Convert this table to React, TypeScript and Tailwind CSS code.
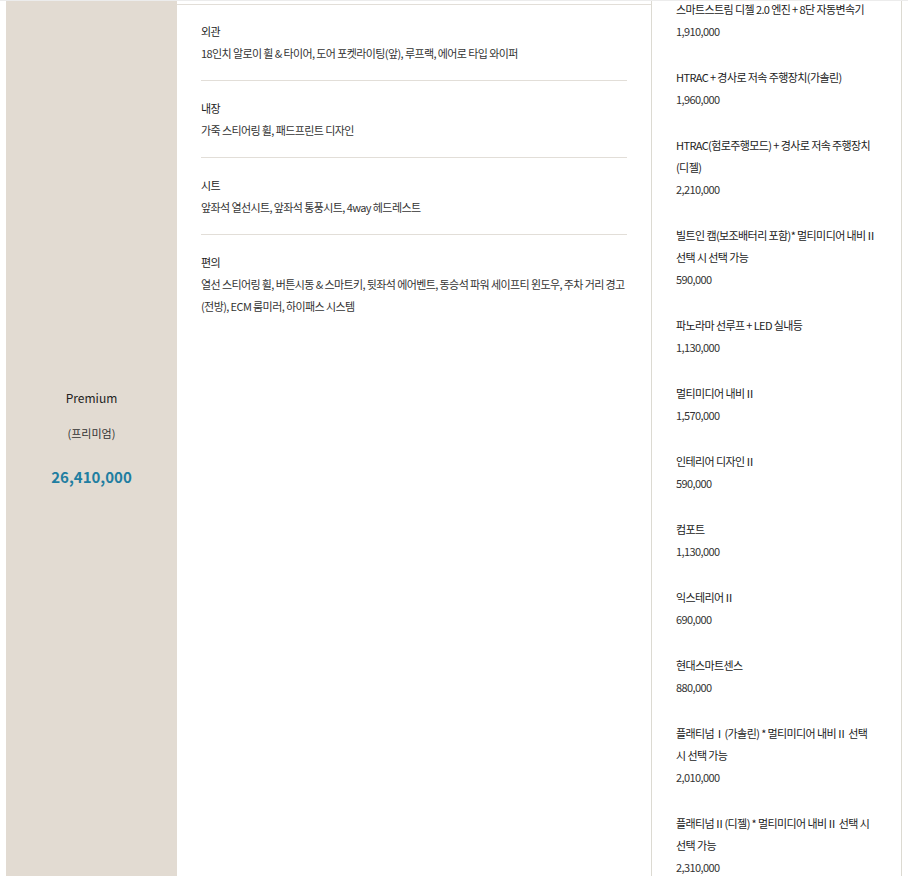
const specs = [
  { title: '외관', desc: '18인치 알로이 휠 & 타이어, 도어 포켓라이팅(앞), 루프랙, 에어로 타입 와이퍼' },
  { title: '내장', desc: '가죽 스티어링 휠, 패드프린트 디자인' },
  { title: '시트', desc: '앞좌석 열선시트, 앞좌석 통풍시트, 4way 헤드레스트' },
  { title: '편의', desc: '열선 스티어링 휠, 버튼시동 & 스마트키, 뒷좌석 에어벤트, 동승석 파워 세이프티 윈도우, 주차 거리 경고 (전방), ECM 룸미러, 하이패스 시스템' },
];

const options = [
  { name: '스마트스트림 디젤 2.0 엔진 + 8단 자동변속기', price: '1,910,000' },
  { name: 'HTRAC + 경사로 저속 주행장치(가솔린)', price: '1,960,000' },
  { name: 'HTRAC(험로주행모드) + 경사로 저속 주행장치 (디젤)', price: '2,210,000' },
  { name: '빌트인 캠(보조배터리 포함)* 멀티미디어 내비Ⅱ 선택 시 선택 가능', price: '590,000' },
  { name: '파노라마 선루프 + LED 실내등', price: '1,130,000' },
  { name: '멀티미디어 내비Ⅱ', price: '1,570,000' },
  { name: '인테리어 디자인Ⅱ', price: '590,000' },
  { name: '컴포트', price: '1,130,000' },
  { name: '익스테리어Ⅱ', price: '690,000' },
  { name: '현대스마트센스', price: '880,000' },
  { name: '플래티넘Ⅰ(가솔린) * 멀티미디어 내비Ⅱ 선택 시 선택 가능', price: '2,010,000' },
  { name: '플래티넘Ⅱ(디젤) * 멀티미디어 내비Ⅱ 선택 시 선택 가능', price: '2,310,000' },
];

export default function App() {
  return (
    <div
      className="h-[876px] w-[908px] overflow-hidden bg-white border-t border-[#ececec] px-[6px] flex text-[#222] tracking-[-0.6px] break-keep"
      style={{ fontFamily: '"Noto Sans CJK KR", "Noto Sans", sans-serif' }}
    >
      <div className="w-[171px] shrink-0 bg-[#e2dbd2] flex flex-col items-center justify-center pb-[2px] tracking-normal">
        <p className="text-[12px] leading-[22px] text-[#222]">Premium</p>
        <p className="text-[11px] leading-[22px] text-[#333] mt-[13px]">(프리미엄)</p>
        <p className="text-[15px] leading-[22px] font-bold text-[#1f7ea1] mt-[22px]">26,410,000</p>
      </div>

      <div className="w-[474px] shrink-0 pt-[3px]">
        <div className="border-t border-[#e2ded8] px-6 pt-[15px]">
          {specs.map((s, i) => (
            <div key={s.title} className={i < specs.length - 1 ? 'border-b border-[#e2ded8] pb-[16px] mb-[16px]' : ''}>
              <p className="text-[11px] leading-[22px]">{s.title}</p>
              <p className="text-[11px] leading-[22px] text-[#333]">{s.desc}</p>
            </div>
          ))}
        </div>
      </div>

      <div className="w-[251px] shrink-0 border-l border-r border-[#dcdad2] pl-6 pr-6 mt-[-3px]">
        {options.map((o) => (
          <div key={o.name} className="mb-6">
            <p className="text-[11px] leading-[22px]">{o.name}</p>
            <p className="text-[11px] leading-[22px] text-[#333]">{o.price}</p>
          </div>
        ))}
      </div>
    </div>
  );
}
